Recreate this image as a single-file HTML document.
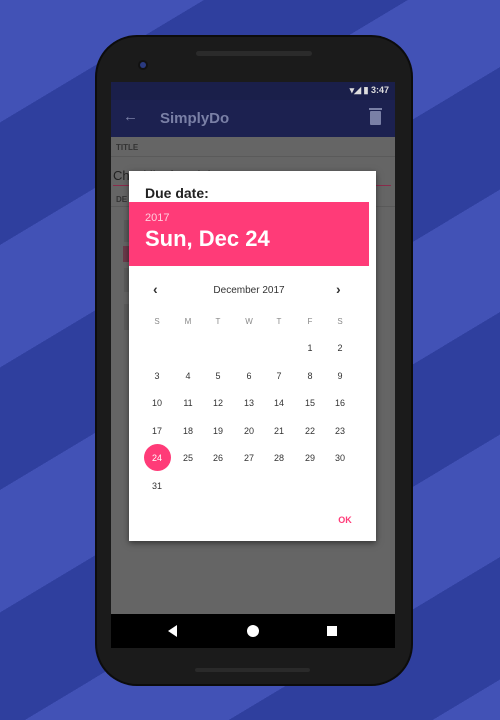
<!DOCTYPE html>
<html><head><style>
*{margin:0;padding:0;box-sizing:border-box}
body{width:500px;height:720px;overflow:hidden;font-family:"Liberation Sans",sans-serif;
background:repeating-linear-gradient(149deg,#4252b6 0 105px,#2f3f9e 105px 210px);position:relative}
.phone{position:absolute;left:97px;top:37px;width:314px;height:647px;background:#1b1b1b;border-radius:40px;box-shadow:0 0 0 2px #0c0c0c}
.speaker{position:absolute;left:196px;top:51px;width:116px;height:5px;border-radius:3px;background:#2b2b2b}
.speaker2{position:absolute;left:195px;top:668px;width:115px;height:4px;border-radius:3px;background:#2a2a2a}
.cam{position:absolute;left:140px;top:62px;width:6px;height:6px;border-radius:50%;background:#2a3a80;box-shadow:0 0 0 2px #111}
.screen{position:absolute;left:111px;top:82px;width:284px;height:566px;background:#656565;overflow:hidden}
.status{position:absolute;left:0;top:0;width:284px;height:18px;background:#1a1f4a;color:#ddd;font-size:9px}
.tool{position:absolute;left:0;top:18px;width:284px;height:37px;background:#1c2150;color:#7a80a6;font-size:15px;font-weight:bold}
.nav{position:absolute;left:0;top:532px;width:284px;height:34px;background:#000}
.dialog{position:absolute;left:129px;top:171px;width:247px;height:370px;background:#fff;box-shadow:0 2px 6px rgba(0,0,0,.5)}
.c{position:absolute;width:30px;text-align:center;font-size:9px;color:#333;transform:translateX(-15px)}
.w{color:#888;font-size:8px}
.blk{position:absolute;left:13px;width:8px;background:#5c5c5c}
</style></head><body>
<div class="phone"></div>
<div class="speaker"></div><div class="cam"></div><div class="speaker2"></div>
<div class="screen">
 <div class="status"><span style="position:absolute;right:6px;top:3px;color:#ddd;font-weight:bold">▾◢ ▮ 3:47</span></div>
 <div class="tool"><span style="position:absolute;left:12px;top:8px;font-weight:normal">←</span><span style="position:absolute;left:49px;top:10px">SimplyDo</span>
 <span style="position:absolute;right:14px;top:11px;width:11px;height:14px;background:#7a80a6;border-radius:1px"></span>
 <span style="position:absolute;right:13px;top:8px;width:13px;height:2px;background:#7a80a6"></span></div>
 <div style="position:absolute;left:5px;top:61px;font-size:8px;color:#333;font-weight:bold">TITLE</div>
 <div style="position:absolute;left:0;top:74px;width:284px;height:1px;background:#5a5a5a"></div>
 <div style="position:absolute;left:2px;top:86px;font-size:13px;color:#222">Checklist for Night</div>
 <div style="position:absolute;left:2px;top:103px;width:278px;height:1px;background:#8a2b4b"></div>
 <div style="position:absolute;left:5px;top:113px;font-size:8px;color:#333;font-weight:bold">DE</div>
 <div style="position:absolute;left:0;top:124px;width:284px;height:1px;background:#5a5a5a"></div>
 <div class="blk" style="top:138px;height:22px"></div>
 <div class="blk" style="top:164px;height:16px;background:#6a3a4a;left:12px;width:6px"></div>
 <div class="blk" style="top:186px;height:24px"></div>
 <div class="blk" style="top:222px;height:26px"></div>
 <div class="nav">
  <div style="position:absolute;left:57px;top:11px;width:0;height:0;border-right:9px solid #fff;border-top:6px solid transparent;border-bottom:6px solid transparent"></div>
  <div style="position:absolute;left:136px;top:11px;width:12px;height:12px;border-radius:50%;background:#fff"></div>
  <div style="position:absolute;left:216px;top:12px;width:10px;height:10px;background:#fff"></div>
 </div>
</div>
<div class="dialog">
 <div style="position:absolute;left:16px;top:14px;font-size:14px;font-weight:bold;color:#222">Due date:</div>
 <div style="position:absolute;left:0;top:31px;width:240px;height:64px;background:#ff3b78;color:#fff">
  <div style="position:absolute;left:16px;top:10px;font-size:11px;color:#ffd0de">2017</div>
  <div style="position:absolute;left:16px;top:24px;font-size:22px;font-weight:bold">Sun, Dec 24</div>
 </div>
</div>
<div style="position:absolute;left:153px;top:281px;font-size:14px;font-weight:bold;color:#333">‹</div>
<div style="position:absolute;left:336px;top:281px;font-size:14px;font-weight:bold;color:#333">›</div>
<div class="c" style="left:249px;top:285px;width:100px;transform:translateX(-50px);font-size:10px">December 2017</div>
<div class="c w" style="left:157px;top:317px">S</div><div class="c w" style="left:188px;top:317px">M</div><div class="c w" style="left:218px;top:317px">T</div><div class="c w" style="left:249px;top:317px">W</div><div class="c w" style="left:279px;top:317px">T</div><div class="c w" style="left:310px;top:317px">F</div><div class="c w" style="left:340px;top:317px">S</div>
<div class="c" style="left:310px;top:343px">1</div><div class="c" style="left:340px;top:343px">2</div>
<div class="c" style="left:157px;top:371px">3</div><div class="c" style="left:188px;top:371px">4</div><div class="c" style="left:218px;top:371px">5</div><div class="c" style="left:249px;top:371px">6</div><div class="c" style="left:279px;top:371px">7</div><div class="c" style="left:310px;top:371px">8</div><div class="c" style="left:340px;top:371px">9</div>
<div class="c" style="left:157px;top:398px">10</div><div class="c" style="left:188px;top:398px">11</div><div class="c" style="left:218px;top:398px">12</div><div class="c" style="left:249px;top:398px">13</div><div class="c" style="left:279px;top:398px">14</div><div class="c" style="left:310px;top:398px">15</div><div class="c" style="left:340px;top:398px">16</div>
<div class="c" style="left:157px;top:426px">17</div><div class="c" style="left:188px;top:426px">18</div><div class="c" style="left:218px;top:426px">19</div><div class="c" style="left:249px;top:426px">20</div><div class="c" style="left:279px;top:426px">21</div><div class="c" style="left:310px;top:426px">22</div><div class="c" style="left:340px;top:426px">23</div>
<div style="position:absolute;left:144px;top:444px;width:27px;height:27px;border-radius:50%;background:#ff3b78"></div>
<div class="c" style="left:157px;top:453px;color:#fff">24</div><div class="c" style="left:188px;top:453px">25</div><div class="c" style="left:218px;top:453px">26</div><div class="c" style="left:249px;top:453px">27</div><div class="c" style="left:279px;top:453px">28</div><div class="c" style="left:310px;top:453px">29</div><div class="c" style="left:340px;top:453px">30</div>
<div class="c" style="left:157px;top:481px">31</div>
<div class="c" style="left:345px;top:515px;color:#ff3b78;font-weight:bold">OK</div>
</body></html>
